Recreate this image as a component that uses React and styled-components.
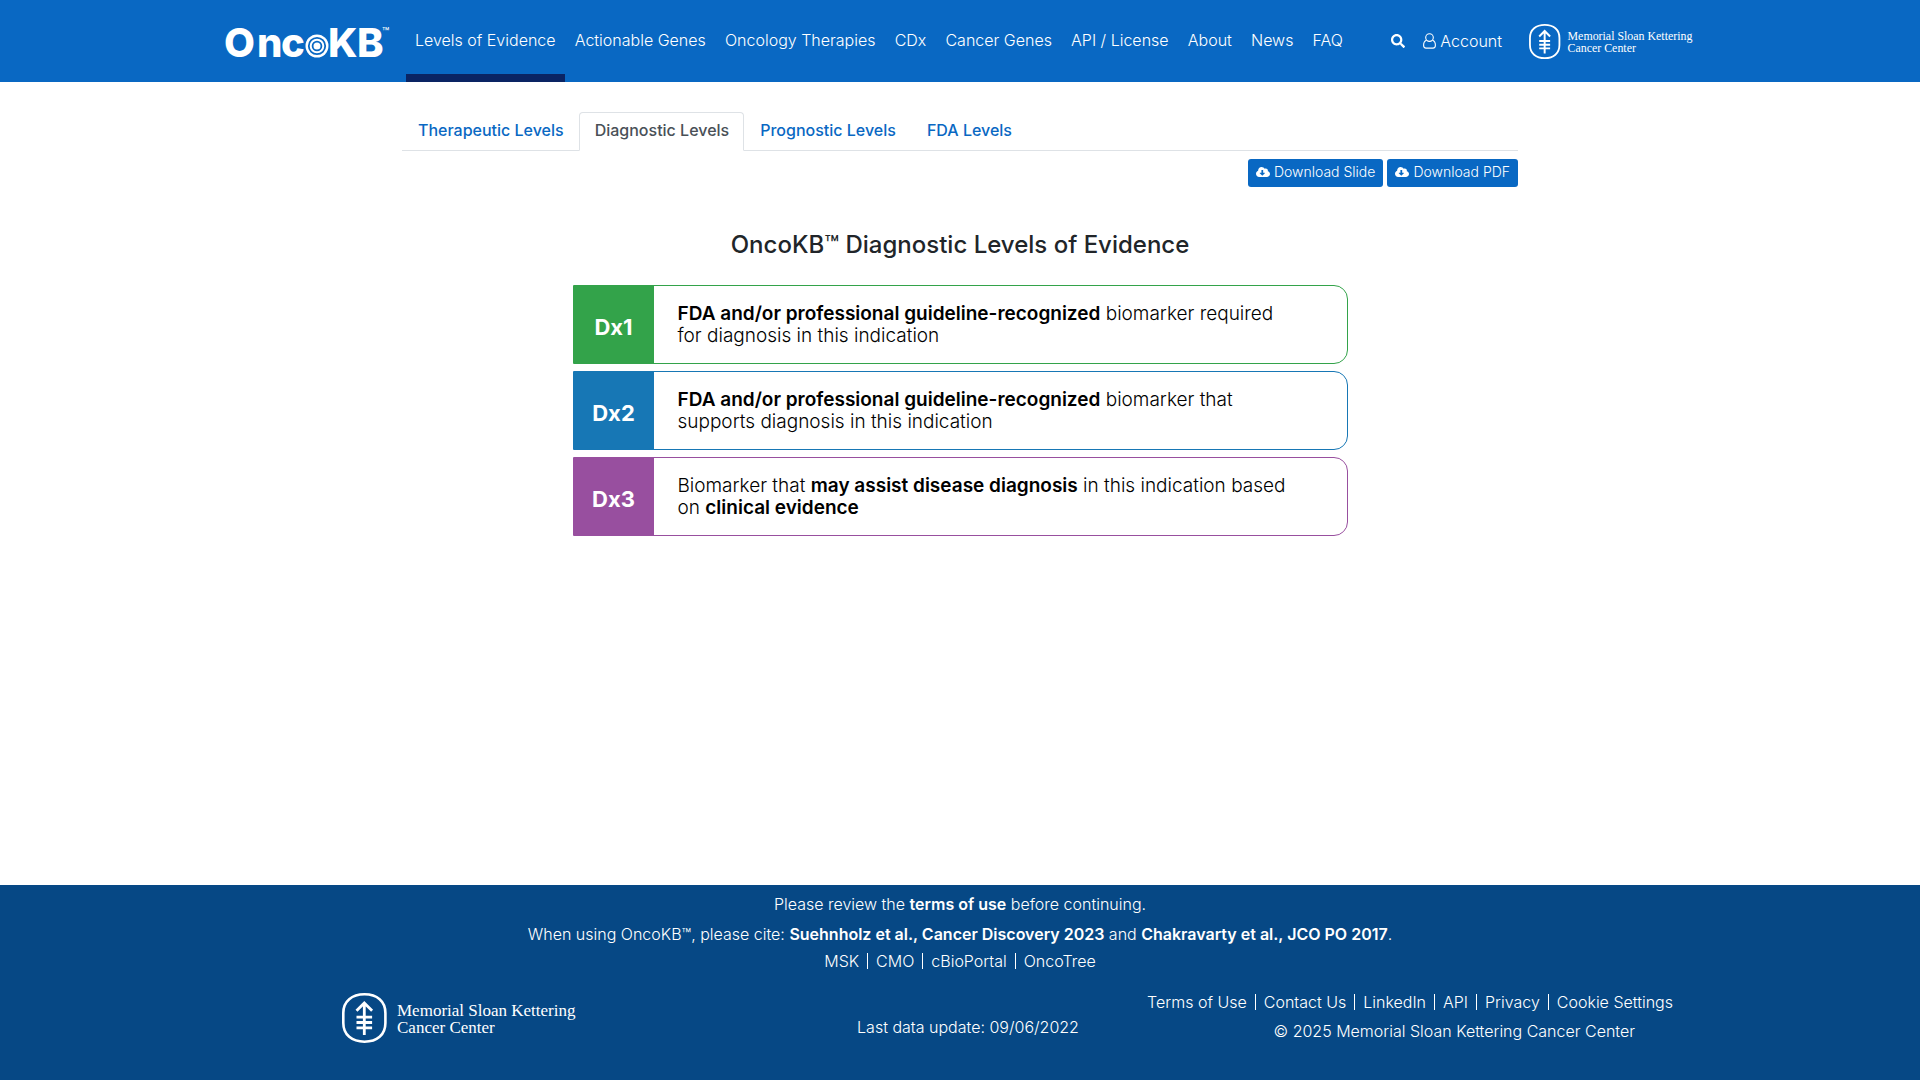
import React from "react";
import styled, { createGlobalStyle } from "styled-components";
import { FaSearch, FaCloudDownloadAlt } from "react-icons/fa";

const GlobalStyle = createGlobalStyle`
  *, *::before, *::after { box-sizing: border-box; }
  body {
    margin: 0;
    background: #fff;
    color: #212529;
    font-family: Inter, "Open Sans", sans-serif;
    font-size: 16px;
    font-weight: 300;
    line-height: 24px;
  }
  b { font-weight: 600; }
  a { text-decoration: none; color: inherit; }
`;

const Page = styled.div`
  min-height: 100vh;
  display: flex;
  flex-direction: column;
`;

const Header = styled.header`
  background: #0968c3;
  color: #fff;
`;

const HeaderInner = styled.div`
  max-width: 1494px;
  min-height: 82px;
  margin: 0 auto;
  padding: 0 12px 0 8px;
  display: flex;
  align-items: stretch;
`;

const HomeLink = styled.a`
  display: flex;
  align-items: center;
  margin-right: 13px;
`;

const Nav = styled.nav`
  flex: 1;
  display: flex;
  justify-content: space-between;
  max-width: 946px;
`;

const NavLink = styled.a`
  display: flex;
  align-items: center;
  padding: 6px 9px 0;
  border-bottom: 8px solid ${(p) => (p.$active ? "#0a2463" : "transparent")};
  white-space: nowrap;
`;

const Tools = styled.div`
  margin-left: auto;
  display: flex;
  align-items: center;
`;

const IconButton = styled.button`
  display: flex;
  padding: 0;
  margin-right: 18px;
  border: 0;
  background: none;
  color: #fff;
  cursor: pointer;
`;

const AccountLink = styled.a`
  display: flex;
  align-items: center;
  gap: 4px;
  margin-right: 27px;
`;

const LogoLink = styled.a`
  display: flex;
`;

const Main = styled.main`
  flex: 1;
  width: 100%;
  max-width: 1140px;
  margin: 0 auto;
  padding: 30px 12px 0;
`;

const Tabs = styled.div`
  display: flex;
  border-bottom: 1px solid #dee2e6;
`;

const Tab = styled.button`
  margin-bottom: -1px;
  padding: 5px 14px 8px 15px;
  border: 1px solid transparent;
  border-color: ${(p) => (p.$active ? "#dee2e6 #dee2e6 #fff" : "transparent")};
  border-radius: 4px 4px 0 0;
  background: ${(p) => (p.$active ? "#fff" : "none")};
  color: ${(p) => (p.$active ? "#495057" : "#0968c3")};
  font: inherit;
  font-weight: 500;
  cursor: pointer;
`;

const Downloads = styled.div`
  display: flex;
  justify-content: flex-end;
  gap: 4px;
  margin-top: 8px;
`;

const DownloadButton = styled.button`
  display: flex;
  align-items: center;
  gap: 4px;
  height: 28px;
  padding: 0 8px 2px;
  border: 0;
  border-radius: 3px;
  background: #0968c3;
  color: #fff;
  font: inherit;
  font-size: 14px;
  cursor: pointer;
`;

const Title = styled.h1`
  margin: 42px 0 24px;
  text-align: center;
  font-size: 24px;
  line-height: 32px;
  font-weight: 500;
`;

const Levels = styled.ul`
  list-style: none;
  width: 100%;
  max-width: 775px;
  margin: 0 auto;
  padding: 0;
  display: grid;
  gap: 7px;
`;

const Level = styled.li`
  display: flex;
  min-height: 79px;
  border: 1px solid ${(p) => p.$color};
  border-radius: 0 14px 14px 0;
`;

const Badge = styled.div`
  flex: 0 0 80px;
  display: flex;
  align-items: center;
  justify-content: center;
  padding-top: 4px;
  background: ${(p) => p.$color};
  color: #fff;
  font-size: 22px;
  font-weight: 700;
`;

const Description = styled.p`
  margin: 0;
  padding: 17px 24px 16px;
  color: #000;
  font-size: 19px;
  line-height: 22px;
`;

const Footer = styled.footer`
  min-height: 195px;
  padding: 7px 12px;
  background: #064885;
  color: #fff;
  text-align: center;
`;

const FooterLine = styled.p`
  margin: 0 0 ${(p) => (p.$tight ? 3 : 6)}px;
`;

const LinkList = styled.div`
  display: flex;
  justify-content: center;

  a {
    line-height: 16px;
    margin: 4px 0;
    padding: 0 8px;
    white-space: nowrap;
  }
  a + a { border-left: 1px solid #fff; }
`;

const FooterColumns = styled.div`
  max-width: 1442px;
  margin: 17px auto 0;
  display: grid;
  grid-template-columns: minmax(0, 1fr) auto minmax(0, 1fr);
`;

const FooterBrand = styled.div`
  padding: 3px 0 0 103px;
  display: flex;
`;

const Updated = styled.p`
  margin: 25px 0 0;
  padding-left: 16px;
`;

const Legal = styled.div`
  display: flex;
  flex-direction: column;
  align-items: flex-end;
  gap: 5px;

  p { margin: 0 46px 0 0; }
`;

function OncoLogo() {
  return (
    <svg width="172" height="50" viewBox="-4 0 172 50" fill="#fff" role="img" aria-label="OncoKB">
      <g fontFamily="Inter, sans-serif" fontWeight="800" fontSize="40">
        <text x="-1" y="41">O</text>
        <text x="32" y="41">n</text>
        <text x="56" y="41">c</text>
        <text x="103" y="41">K</text>
        <text x="132" y="41">B</text>
      </g>
      <text x="157" y="20" fontFamily="Inter, sans-serif" fontWeight="400" fontSize="12">™</text>
      <g transform="translate(92 30)">
        <circle r="11.5" />
        <circle r="8.2" fill="none" stroke="#0968c3" strokeWidth="1.8" />
        <circle r="4.4" fill="none" stroke="#0968c3" strokeWidth="1.8" />
      </g>
    </svg>
  );
}

function MskLogo({ width, height }) {
  return (
    <svg width={width} height={height} viewBox="0 0 237 50" fill="none" stroke="#fff" role="img" aria-label="Memorial Sloan Kettering Cancer Center">
      <path
        strokeWidth="2.6"
        d="M22.5 1.3C35 1.3 43.4 8 43.4 20V30C43.4 42 35 48.7 22.5 48.7S1.3 42 1.3 30V20C1.3 8 10 1.3 22.5 1.3Z"
      />
      <path
        strokeWidth="2.8"
        d="M22.3 42V10M14.5 17.8L22.3 10L30.1 17.8M14.5 24.2H30.1M14.5 29.5H30.1M14.5 34.8H30.1"
      />
      <g fill="#fff" stroke="none" fontFamily='"Liberation Serif", serif' fontWeight="400" fontSize="17">
        <text x="55" y="22.5">Memorial Sloan Kettering</text>
        <text x="55" y="39.5">Cancer Center</text>
      </g>
    </svg>
  );
}

function UserIcon() {
  return (
    <svg width="13" height="16" viewBox="0 0 13 16" fill="none" stroke="#fff" strokeWidth="1.1" aria-hidden="true">
      <circle cx="6.5" cy="4.6" r="3.8" />
      <path d="M3.4 7.2C1.4 8 .6 10 .6 12.2C.6 14 1.6 15.1 3 15.1H10C11.4 15.1 12.4 14 12.4 12.2C12.4 10 11.6 8 9.6 7.2" />
    </svg>
  );
}

const navItems = [
  "Levels of Evidence",
  "Actionable Genes",
  "Oncology Therapies",
  "CDx",
  "Cancer Genes",
  "API / License",
  "About",
  "News",
  "FAQ",
];

const tabs = ["Therapeutic Levels", "Diagnostic Levels", "Prognostic Levels", "FDA Levels"];

const levels = [
  {
    name: "Dx1",
    color: "#33a34a",
    text: (
      <>
        <b>FDA and/or professional guideline-recognized</b> biomarker required
        <br />
        for diagnosis in this indication
      </>
    ),
  },
  {
    name: "Dx2",
    color: "#1777b5",
    text: (
      <>
        <b>FDA and/or professional guideline-recognized</b> biomarker that
        <br />
        supports diagnosis in this indication
      </>
    ),
  },
  {
    name: "Dx3",
    color: "#984f9f",
    text: (
      <>
        Biomarker that <b>may assist disease diagnosis</b> in this indication based
        <br />
        on <b>clinical evidence</b>
      </>
    ),
  },
];

const partnerLinks = ["MSK", "CMO", "cBioPortal", "OncoTree"];
const legalLinks = ["Terms of Use", "Contact Us", "LinkedIn", "API", "Privacy", "Cookie Settings"];

const Links = ({ items }) => (
  <LinkList>
    {items.map((item) => (
      <a key={item} href="#">{item}</a>
    ))}
  </LinkList>
);

export default function App() {
  return (
    <Page>
      <GlobalStyle />
      <Header>
        <HeaderInner>
          <HomeLink href="#"><OncoLogo /></HomeLink>
          <Nav>
            {navItems.map((item, i) => (
              <NavLink key={item} href="#" $active={i === 0}>{item}</NavLink>
            ))}
          </Nav>
          <Tools>
            <IconButton aria-label="Search"><FaSearch size={14} /></IconButton>
            <AccountLink href="#"><UserIcon />Account</AccountLink>
            <LogoLink href="#"><MskLogo width={166} height={35} /></LogoLink>
          </Tools>
        </HeaderInner>
      </Header>

      <Main>
        <Tabs role="tablist">
          {tabs.map((tab, i) => (
            <Tab key={tab} role="tab" aria-selected={i === 1} $active={i === 1}>{tab}</Tab>
          ))}
        </Tabs>
        <Downloads>
          <DownloadButton><FaCloudDownloadAlt size={14} />Download Slide</DownloadButton>
          <DownloadButton><FaCloudDownloadAlt size={14} />Download PDF</DownloadButton>
        </Downloads>
        <Title>OncoKB™ Diagnostic Levels of Evidence</Title>
        <Levels>
          {levels.map((level) => (
            <Level key={level.name} $color={level.color}>
              <Badge $color={level.color}>{level.name}</Badge>
              <Description>{level.text}</Description>
            </Level>
          ))}
        </Levels>
      </Main>

      <Footer>
        <FooterLine>
          Please review the <a href="#"><b>terms of use</b></a> before continuing.
        </FooterLine>
        <FooterLine $tight>
          When using OncoKB™, please cite: <a href="#"><b>Suehnholz et al., Cancer Discovery 2023</b></a> and{" "}
          <a href="#"><b>Chakravarty et al., JCO PO 2017</b></a>.
        </FooterLine>
        <Links items={partnerLinks} />
        <FooterColumns>
          <FooterBrand>
            <a href="#"><MskLogo width={237} height={50} /></a>
          </FooterBrand>
          <Updated>Last data update: 09/06/2022</Updated>
          <Legal>
            <Links items={legalLinks} />
            <p>© 2025 Memorial Sloan Kettering Cancer Center</p>
          </Legal>
        </FooterColumns>
      </Footer>
    </Page>
  );
}
